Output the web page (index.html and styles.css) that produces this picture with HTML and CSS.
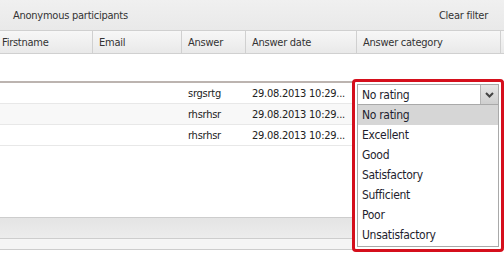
FILE: index.html
```html
<!DOCTYPE html>
<html lang="en">
  <head>
    <meta charset="UTF-8" />
    <title>Participants</title>
    <link rel="stylesheet" href="styles.css">
  </head>
  <body>
    <div class="grid">
      <div class="toolbar">
        <span class="title">Anonymous participants</span>
        <span class="clear">Clear filter</span>
      </div>
      <div class="header">
        <div class="col c1">Firstname</div>
        <div class="col c2">Email</div>
        <div class="col c3">Answer</div>
        <div class="col c4">Answer date</div>
        <div class="col c5">Answer category</div>
      </div>
      <div class="filter-row"></div>
      <div class="rows">
        <div class="row">
          <div class="col c1"></div>
          <div class="col c2"></div>
          <div class="col c3">srgsrtg</div>
          <div class="col c4">29.08.2013 10:29...</div>
          <div class="col c5"></div>
        </div>
        <div class="row alt">
          <div class="col c1"></div>
          <div class="col c2"></div>
          <div class="col c3">rhsrhsr</div>
          <div class="col c4">29.08.2013 10:29...</div>
          <div class="col c5"></div>
        </div>
        <div class="row">
          <div class="col c1"></div>
          <div class="col c2"></div>
          <div class="col c3">rhsrhsr</div>
          <div class="col c4">29.08.2013 10:29...</div>
          <div class="col c5"></div>
        </div>
      </div>
      <div class="spacer"></div>
      <div class="pager"></div>
      <div class="footer"></div>

      <!-- highlighted category editor -->
      <div class="highlight">
        <div class="combo">
          <div class="combo-value">No rating</div>
          <div class="combo-arrow">
            <svg width="9" height="6" viewBox="0 0 9 6">
              <path d="M1 1 L4.5 4.5 L8 1" fill="none" stroke="#444" stroke-width="2"/>
            </svg>
          </div>
        </div>
        <ul class="options">
          <li class="selected">No rating</li>
          <li>Excellent</li>
          <li>Good</li>
          <li>Satisfactory</li>
          <li>Sufficient</li>
          <li>Poor</li>
          <li>Unsatisfactory</li>
        </ul>
      </div>
    </div>
  </body>
</html>
```

FILE: styles.css
```css
body {
  margin: 0;
  padding: 0;
  background-color: #fff;
  font-family: "DejaVu Sans Condensed", "DejaVu Sans", sans-serif;
  font-stretch: condensed;
  font-size: 11px;
  letter-spacing: -0.25px;
  color: #333;
}

.grid {
  position: relative;
  width: 504px;
  height: 253px;
  overflow: hidden;
}

.toolbar {
  display: flex;
  justify-content: space-between;
  align-items: center;
  height: 30px;
  padding: 0 16px 0 13px;
  background: linear-gradient(#f0f0f0, #e9e9e9);
  border-bottom: 1px solid #d0d0d0;
}

.header {
  display: flex;
  height: 22px;
  background: linear-gradient(#f7f7f7, #e9e9e9);
  border-bottom: 1px solid #d0d0d0;
}

.header .col {
  display: flex;
  align-items: center;
  border-right: 1px solid #d0d0d0;
}

.col {
  box-sizing: border-box;
  padding-left: 6px;
  white-space: nowrap;
  overflow: hidden;
}

.c1 { width: 93px; padding-left: 2px; }
.c2 { width: 89px; }
.c3 { width: 64px; }
.c4 { width: 111px; }
.c5 { width: 144px; }

.filter-row {
  height: 27px;
  border-bottom: 2px solid #bcb4b0;
}

.row {
  display: flex;
  align-items: center;
  height: 20px;
  border-bottom: 1px solid #e8e8e8;
  color: #222;
}

.row.alt {
  background-color: #f8f8f8;
}

.spacer {
  height: 71px;
}

.pager {
  height: 20px;
  background: linear-gradient(#e4e4e4, #ececec);
  border-top: 1px solid #cdcdcd;
  border-bottom: 1px solid #cdcdcd;
}

.footer {
  height: 10px;
  background-color: #f5f5f5;
  border-bottom: 1px solid #cdcdcd;
}

/* red frame around the open combo */
.highlight {
  position: absolute;
  left: 352px;
  top: 79px;
  box-sizing: border-box;
  display: flex;
  flex-direction: column;
  width: 152px;
  height: 173px;
  border: 3px solid #d50f1c;
  border-radius: 4px;
  padding: 2px;
  background-color: #fff;
  font-size: 12px;
  letter-spacing: -0.3px;
  color: #1e1e2e;
}

.combo {
  display: flex;
  height: 19px;
  border: 1px solid #a9a9a9;
  background-color: #fff;
}

.combo-value {
  flex: 1;
  display: flex;
  align-items: center;
  padding-left: 4px;
}

.combo-arrow {
  display: flex;
  align-items: center;
  justify-content: center;
  width: 17px;
  background: linear-gradient(#e6e6e6, #cfcfcf);
  border-left: 1px solid #b5b5b5;
}

.options {
  flex: 1;
  list-style: none;
  margin: 0;
  padding: 0;
  border: 1px solid #a9a9a9;
  border-top: none;
}

.options li {
  height: 20px;
  line-height: 20px;
  padding-left: 4px;
}

.options li.selected {
  background-color: #d6d6d6;
}
```
